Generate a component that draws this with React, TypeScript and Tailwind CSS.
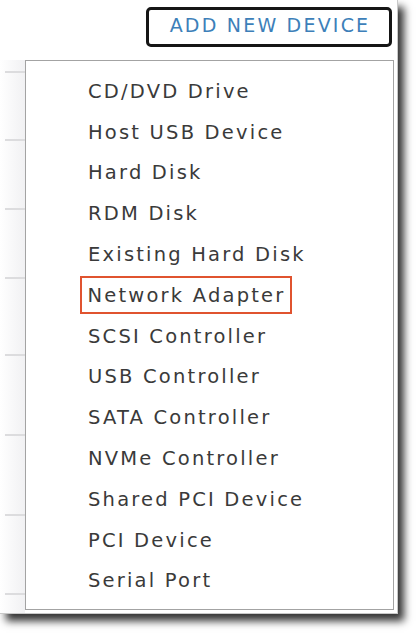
const devices = [
  "CD/DVD Drive",
  "Host USB Device",
  "Hard Disk",
  "RDM Disk",
  "Existing Hard Disk",
  "Network Adapter",
  "SCSI Controller",
  "USB Controller",
  "SATA Controller",
  "NVMe Controller",
  "Shared PCI Device",
  "PCI Device",
  "Serial Port",
]

// row heights of the table peeking out behind the dropdown
const rows = [68, 69, 69, 77, 80, 80, 79, 19]

export default function App() {
  return (
    <div className="w-[418px] h-[636px] bg-white" style={{ fontFamily: '"DejaVu Sans", "Liberation Sans", sans-serif' }}>
      <div className="w-[398px] h-[614px] bg-white border-r border-b border-[#c9c9c9] shadow-[6px_7px_8px_rgba(0,0,0,0.8)] flex flex-col">
        <div className="flex justify-end pt-[7px] pr-[5px]">
          <button className="w-[246px] h-[40px] rounded-[5px] border-[3px] border-[#151515] bg-white text-[#3d7fb9] text-[19px] tracking-[2.2px] leading-none pb-[3px] pl-[2px]">
            ADD NEW DEVICE
          </button>
        </div>

        <div className="flex mt-[13px] flex-1">
          <div className="w-[25px] pt-[11px] flex flex-col bg-gradient-to-r from-white to-[#f1f1f3]">
            {rows.map((h, i) => (
              <div key={i} className="border-t-2 border-[#dcdcde] ml-[5px]" style={{ height: h }} />
            ))}
          </div>
          <div className="w-[369px] h-[550px] border border-[#a3a3a3] bg-white pt-[10px]">
            {devices.map((d) => (
              <div key={d} className="h-[40.8px] flex items-center pl-[62px]">
                <span
                  className={
                    d === "Network Adapter"
                      ? "pl-[6px] pr-[5px] -ml-[8.5px] h-[38px] flex items-center border-[2.5px] border-[#e0532f] text-[#3a3a3a] text-[19.5px] tracking-[2.2px]"
                      : "text-[#3a3a3a] text-[19.5px] tracking-[2.2px]"
                  }
                >
                  {d}
                </span>
              </div>
            ))}
          </div>
        </div>
      </div>
    </div>
  )
}
